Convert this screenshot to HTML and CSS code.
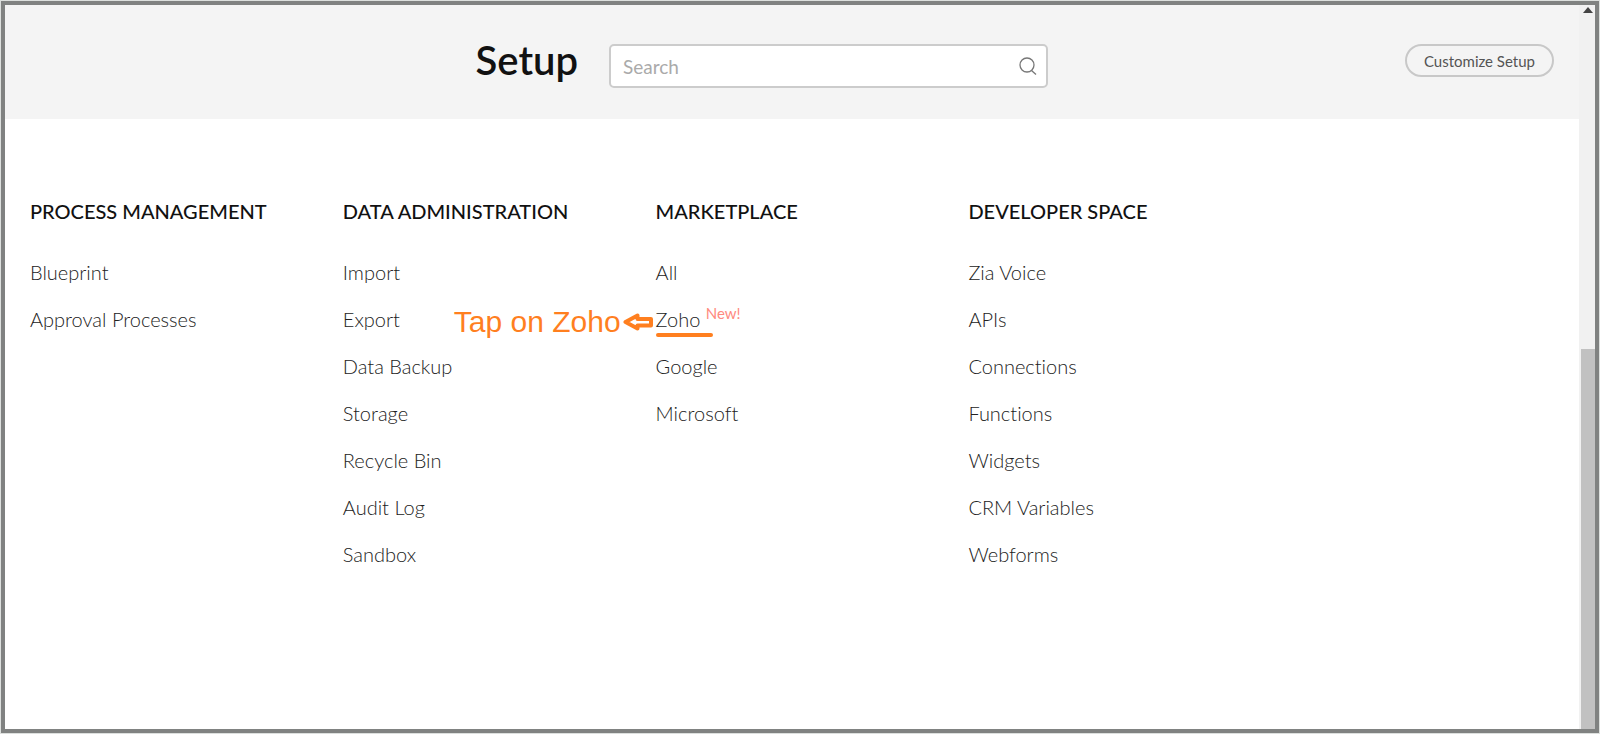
FILE: index.html
```html
<!DOCTYPE html>
<html lang="en">
<head>
    <meta charset="UTF-8">
    <meta name="viewport" content="width=device-width, initial-scale=1.0">
    <title>Setup</title>
    <link rel="stylesheet" href="styles.css">
</head>
<body>
    <div class="frame">
        <div class="page">
            <header class="topbar">
                <h1>Setup</h1>
                <form class="search" role="search">
                    <input type="search" id="search" placeholder="Search" aria-label="Search">
                    <button type="submit" class="search-button" aria-label="Search">
                        <svg width="18" height="18" viewBox="0 0 18 18" fill="none" stroke="#777" stroke-width="1.3">
                            <circle cx="8" cy="8" r="7"/>
                            <path d="M12.5 13.5L17 17.5"/>
                        </svg>
                    </button>
                </form>
                <div class="actions">
                    <button type="button" class="customize">Customize Setup</button>
                </div>
            </header>

            <main class="columns">
                <section>
                    <h2>PROCESS MANAGEMENT</h2>
                    <ul>
                        <li><a href="#">Blueprint</a></li>
                        <li><a href="#">Approval Processes</a></li>
                    </ul>
                </section>
                <section>
                    <h2>DATA ADMINISTRATION</h2>
                    <ul>
                        <li><a href="#">Import</a></li>
                        <li><a href="#">Export</a></li>
                        <li><a href="#">Data Backup</a></li>
                        <li><a href="#">Storage</a></li>
                        <li><a href="#">Recycle Bin</a></li>
                        <li><a href="#">Audit Log</a></li>
                        <li><a href="#">Sandbox</a></li>
                    </ul>
                </section>
                <section>
                    <h2>MARKETPLACE</h2>
                    <ul>
                        <li><a href="#">All</a></li>
                        <li class="highlight">
                            <div class="hint">
                                <span>Tap on Zoho</span>
                                <svg width="30" height="18" viewBox="0 0 30 18" fill="none" stroke="#ff7f1f" stroke-width="4" stroke-linejoin="round">
                                    <path d="M2.5 9L14.5 2.5V6H28V12.5H14.5V15.5Z"/>
                                </svg>
                            </div>
                            <a href="#">Zoho</a>
                            <span class="new">New!</span>
                        </li>
                        <li><a href="#">Google</a></li>
                        <li><a href="#">Microsoft</a></li>
                    </ul>
                </section>
                <section>
                    <h2>DEVELOPER SPACE</h2>
                    <ul>
                        <li><a href="#">Zia Voice</a></li>
                        <li><a href="#">APIs</a></li>
                        <li><a href="#">Connections</a></li>
                        <li><a href="#">Functions</a></li>
                        <li><a href="#">Widgets</a></li>
                        <li><a href="#">CRM Variables</a></li>
                        <li><a href="#">Webforms</a></li>
                    </ul>
                </section>
            </main>
        </div>

        <div class="scrollbar">
            <svg width="10" height="6" viewBox="0 0 10 6"><path d="M0 6L5 0L10 6Z" fill="#444"/></svg>
            <div class="thumb"></div>
        </div>
    </div>
</body>
</html>
```
FILE: styles.css
```css
* {
    box-sizing: border-box;
}

body {
    margin: 0;
    background-color: #dcdfdd;
    font-family: Lato, "Open Sans", sans-serif;
    font-variant-ligatures: none;
    color: #111;
}

.frame {
    display: flex;
    min-height: 100vh;
    border: 1px solid #dcdfdd;
    box-shadow: inset 0 0 0 4px #808281;
    padding: 4px;
    background-color: #fff;
}

.page {
    flex: 1;
}

/* Header */
.topbar {
    display: grid;
    grid-template-columns: 15fr 439px 13fr;
    column-gap: 31px;
    align-items: start;
    height: 114px;
    padding: 39px 25px 0;
    background-color: #f4f4f4;
}

h1 {
    margin: 0;
    font-size: 40px;
    line-height: 32px;
    font-weight: 600;
    text-align: right;
}

.search {
    position: relative;
}

.search input {
    width: 100%;
    height: 44px;
    padding: 0 50px 0 12px;
    border: 2px solid #ccc;
    border-radius: 5px;
    background-color: #fff;
    font-family: inherit;
    font-size: 19px;
}

.search input::placeholder {
    color: #aaa;
}

.search-button {
    position: absolute;
    top: 13px;
    right: 11px;
    padding: 0;
    border: none;
    background: none;
    cursor: pointer;
}

.search-button svg {
    display: block;
}

.actions {
    text-align: right;
}

.customize {
    height: 33px;
    padding: 0 17px;
    border: 2px solid #c8c8c8;
    border-radius: 17px;
    background: none;
    font-family: inherit;
    font-size: 15px;
    color: #555;
    cursor: pointer;
}

/* Setup links */
.columns {
    display: grid;
    grid-template-columns: repeat(5, 1fr);
    padding: 80px 0 60px 10px;
}

.columns section {
    padding-left: 15px;
}

h2 {
    margin: 0 0 26px;
    font-size: 20px;
    line-height: 24px;
    font-weight: 500;
}

ul {
    margin: 0;
    padding: 0;
    list-style: none;
}

li {
    height: 47px;
    font-size: 20px;
    line-height: 47px;
    font-weight: 300;
}

li a {
    color: #222;
    text-decoration: none;
}

.highlight {
    position: relative;
}

.highlight::after {
    content: "";
    position: absolute;
    left: 0;
    bottom: 6px;
    width: 57px;
    height: 4px;
    border-radius: 2px;
    background-color: #ff7f1f;
}

.new {
    font-size: 15px;
    font-weight: 400;
    vertical-align: 8px;
    line-height: 1;
    color: #ff8a80;
}

.hint {
    position: absolute;
    top: 2px;
    right: 100%;
    display: flex;
    align-items: center;
    gap: 2px;
    margin-right: 3px;
    font-family: "Liberation Sans", Arial, sans-serif;
    font-size: 30px;
    font-weight: 400;
    color: #ff7f1f;
    white-space: nowrap;
}

/* Scrollbar */
.scrollbar {
    display: flex;
    flex-direction: column;
    align-items: center;
    width: 16px;
    padding: 2px 0 0 2px;
    background-color: #f1f1f1;
}

.thumb {
    width: 100%;
    height: 52.7%;
    margin-top: auto;
    background-color: #c1c1c1;
}
```
